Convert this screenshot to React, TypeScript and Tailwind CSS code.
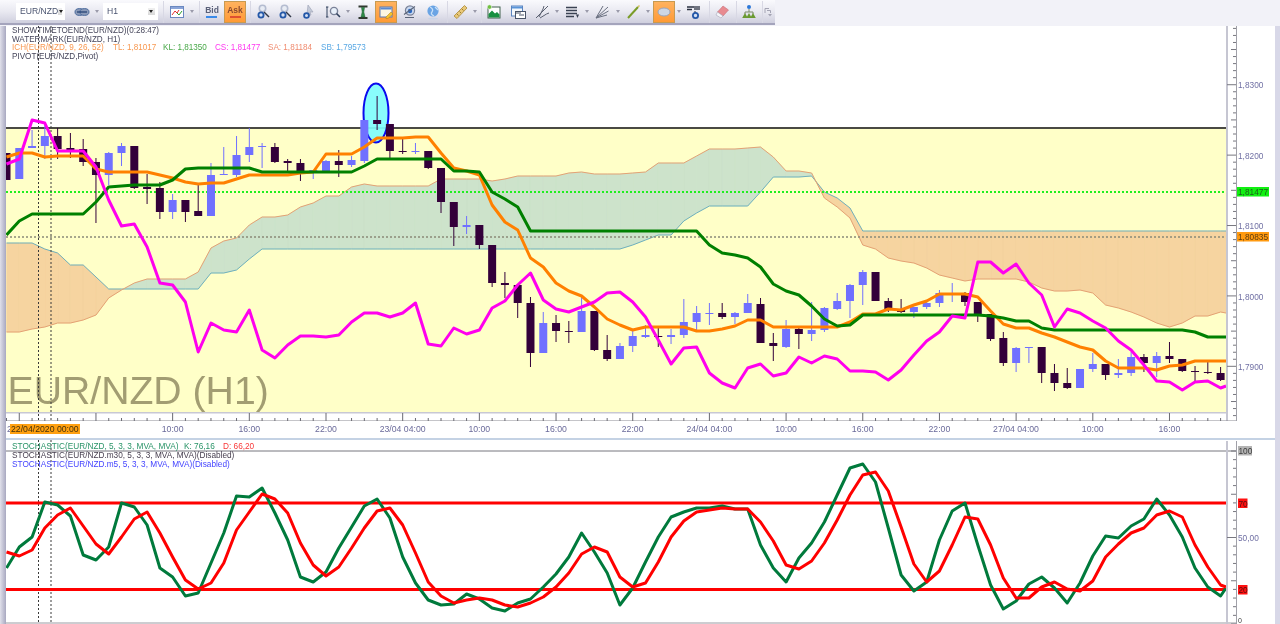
import type { ReactNode } from 'react';

// candle i sits at this x, one bar per hour
const barX = (i: number) => 6.5 + 12.78 * i;
const END_X = 1226;

// top, bottom, wick top, wick bottom, dark
type Candle = [number, number, number, number, number];

const candles: Candle[] = [
  [153, 180, 153, 180, 1], [148, 179, 148, 179, 0], [146, 148, 130, 148, 0], [136, 146, 123, 159, 0],
  [136, 149, 128, 159, 1], [148, 151, 133, 158, 1], [149, 162, 139, 166, 1], [162, 175, 158, 223, 1],
  [153, 175, 152, 185, 0], [146, 153, 143, 166, 0], [146, 188, 146, 189, 1], [187, 189, 174, 204, 1],
  [188, 212, 182, 219, 1], [200, 212, 194, 219, 0], [200, 212, 200, 222, 1], [211, 216, 185, 216, 1],
  [175, 216, 163, 216, 0], [174, 175, 147, 175, 0], [155, 175, 136, 177, 0], [147, 155, 128, 162, 0],
  [146, 147, 143, 168, 0], [147, 162, 143, 163, 1], [161, 163, 159, 172, 1], [163, 172, 159, 181, 1],
  [170, 172, 170, 179, 0], [161, 172, 160, 173, 0], [161, 165, 150, 177, 1], [160, 165, 156, 167, 0],
  [120, 161, 120, 163, 0], [120, 124, 96, 130, 1], [124, 151, 124, 158, 1], [151, 152, 139, 154, 1],
  [151, 152, 143, 154, 0], [151, 168, 151, 169, 1], [168, 202, 168, 213, 1], [202, 227, 202, 246, 1],
  [225, 227, 216, 234, 0], [225, 245, 225, 249, 1], [245, 283, 245, 287, 1], [283, 285, 272, 298, 1],
  [285, 303, 285, 318, 1], [303, 353, 297, 367, 1], [323, 353, 312, 353, 0], [323, 331, 315, 342, 1],
  [331, 332, 321, 343, 1], [311, 332, 297, 332, 0], [311, 350, 311, 351, 1], [350, 359, 335, 361, 1],
  [346, 359, 343, 359, 0], [336, 346, 331, 352, 0], [335, 337, 325, 338, 0], [336, 337, 327, 347, 1],
  [335, 337, 329, 344, 0], [322, 335, 299, 338, 0], [313, 322, 306, 330, 0], [313, 314, 303, 325, 0],
  [313, 317, 303, 319, 1], [313, 317, 312, 324, 0], [303, 313, 294, 313, 0], [304, 343, 298, 343, 1],
  [343, 346, 333, 361, 1], [329, 347, 320, 348, 0], [329, 334, 327, 349, 1], [330, 334, 302, 341, 0],
  [308, 330, 307, 332, 0], [301, 309, 293, 310, 0], [285, 301, 284, 318, 0], [272, 285, 270, 305, 0],
  [272, 301, 272, 301, 1], [301, 309, 298, 312, 1], [310, 312, 299, 313, 1], [307, 312, 307, 318, 0],
  [303, 307, 300, 309, 0], [293, 303, 290, 307, 0], [293, 294, 283, 302, 0], [293, 302, 292, 306, 1],
  [302, 314, 302, 322, 1], [314, 339, 314, 341, 1], [338, 363, 332, 366, 1], [348, 363, 347, 372, 0],
  [347, 348, 347, 363, 0], [347, 373, 347, 383, 1], [373, 383, 364, 391, 1], [383, 388, 368, 389, 1],
  [369, 388, 369, 388, 0], [364, 369, 353, 372, 0], [364, 375, 364, 380, 1], [373, 375, 359, 378, 0],
  [357, 373, 352, 376, 0], [357, 363, 354, 372, 1], [356, 363, 352, 377, 0], [356, 359, 342, 363, 1],
  [359, 371, 359, 372, 1], [371, 372, 366, 381, 1], [372, 373, 362, 374, 1], [373, 380, 367, 381, 1],
];

const cs = [
  164, 159, 120, 123, 151, 151, 151, 167, 200, 226, 224, 247, 283, 285, 302, 352, 323, 330, 332, 310, 350, 358, 345, 336, 336, 337, 335, 322, 313, 313, 317, 313, 303, 344,
  346, 328, 334, 330, 308, 301, 285, 273, 300, 309, 312, 307, 302, 293, 292, 302, 317, 340, 364, 348, 347, 373, 383, 388, 368, 364, 376, 373, 357, 363, 356, 359, 371,
  371, 372, 380, 370, 355, 341, 332, 316, 318, 262, 262, 273, 264, 283, 295, 327, 309, 313, 321, 328, 341, 350, 365, 381, 382, 390, 382, 381, 388, 386,
];
const tl = [
  157, 153, 153, 157, 156, 156, 156, 169, 172, 172, 172, 172, 175, 178, 182, 184, 183, 183, 179, 175, 175, 175, 175, 173, 172, 154, 154, 154, 147, 138, 138, 138, 137, 137,
  153, 168, 171, 175, 205, 222, 230, 258, 267, 283, 291, 296, 307, 319, 325, 330, 327, 327, 327, 327, 331, 331, 329, 326, 320, 320, 327, 327, 327, 327, 327, 327, 322,
  314, 314, 309, 310, 305, 301, 294, 294, 294, 297, 311, 324, 328, 328, 333, 337, 342, 347, 350, 361, 368, 368, 368, 370, 366, 365, 361, 361, 361, 361,
];
const kl = [
  235, 221, 214, 214, 214, 214, 214, 202, 187, 186, 185, 185, 185, 180, 169, 168, 168, 168, 168, 168, 172, 172, 172, 172, 172, 172, 172, 172, 166, 159, 159, 159, 159, 159,
  159, 171, 171, 172, 192, 199, 207, 231, 231, 231, 231, 231, 231, 231, 231, 231, 231, 231, 231, 231, 231, 245, 253, 255, 258, 267, 284, 291, 295, 306, 319, 326, 325,
  315, 315, 315, 315, 315, 315, 315, 315, 315, 315, 316, 318, 321, 321, 328, 330, 330, 330, 330, 330, 330, 330, 330, 330, 330, 330, 332, 337, 337, 337,
];
const sa = [
  332, 332, 329, 327, 323, 323, 320, 315, 298, 290, 283, 279, 279, 279, 279, 272, 248, 241, 238, 225, 217, 217, 215, 207, 203, 196, 196, 187, 184, 186, 186, 186, 186, 186,
  179, 179, 179, 179, 181, 179, 176, 176, 176, 176, 173, 172, 174, 174, 174, 173, 172, 163, 163, 163, 156, 149, 149, 149, 148, 147, 157, 171, 171, 173, 198, 207, 218,
  245, 249, 258, 261, 263, 268, 275, 278, 281, 279, 279, 279, 279, 282, 288, 291, 291, 290, 293, 305, 308, 312, 317, 323, 327, 323, 316, 316, 312, 313,
];
const sb = [
  243, 243, 243, 249, 253, 265, 265, 277, 289, 289, 289, 289, 289, 289, 289, 289, 273, 273, 270, 259, 249, 249, 249, 249, 249, 249, 249, 249, 249, 249, 249, 249, 249, 249,
  249, 249, 249, 249, 249, 249, 249, 249, 249, 249, 249, 249, 249, 249, 249, 245, 240, 235, 235, 221, 213, 206, 206, 206, 206, 192, 177, 177, 177, 176, 192, 198, 208,
  231, 231, 231, 231, 231, 231, 231, 231, 231, 231, 231, 231, 231, 231, 231, 231, 231, 231, 231, 231, 231, 231, 231, 231, 231, 231, 231, 231, 231, 231,
];
const stochK = [
  568, 547, 537, 502, 505, 516, 555, 560, 547, 503, 507, 525, 568, 577, 596, 593, 563, 533, 496, 497, 488, 513, 540, 577, 582, 572, 548, 527, 506, 499, 518, 557, 583, 600,
  605, 604, 594, 599, 608, 611, 603, 599, 587, 574, 557, 533, 552, 573, 605, 588, 562, 537, 517, 512, 508, 508, 506, 509, 509, 545, 568, 582, 558, 543, 522, 495, 468,
  464, 482, 528, 575, 591, 582, 540, 511, 503, 545, 585, 609, 601, 584, 577, 588, 603, 583, 556, 536, 538, 526, 519, 499, 515, 537, 568, 587, 596, 588,
];
const stochD = [
  552, 556, 550, 528, 515, 508, 526, 544, 554, 537, 519, 512, 533, 557, 580, 589, 583, 563, 530, 512, 494, 499, 513, 543, 565, 576, 567, 548, 528, 511, 508, 525, 553, 582,
  596, 603, 600, 598, 600, 605, 607, 603, 597, 587, 573, 554, 547, 552, 577, 587, 583, 562, 537, 521, 512, 510, 508, 509, 509, 522, 541, 565, 569, 561, 543, 520, 495,
  475, 472, 491, 527, 564, 582, 571, 545, 517, 519, 545, 578, 598, 598, 587, 582, 589, 591, 581, 557, 544, 533, 528, 515, 511, 517, 545, 567, 585, 587,
];

// last value of each series is the right edge of the plot, not a bar
const xAt = (i: number, len: number) => (i === len - 1 ? END_X : barX(i));
const points = (ys: number[]) => ys.map((y, i) => `${xAt(i, ys.length).toFixed(1)},${y}`).join(' ');

// split the kumo into green and orange quads, cutting at each crossing
function cloudPaths() {
  let green = '';
  let orange = '';
  const quad = (x1: number, a1: number, b1: number, x2: number, a2: number, b2: number) => {
    const d = `M${x1} ${a1}L${x2} ${a2}L${x2} ${b2}L${x1} ${b1}Z`;
    if (a1 + a2 < b1 + b2) green += d;
    else orange += d;
  };
  for (let i = 0; i < sa.length - 1; i++) {
    const x1 = xAt(i, sa.length);
    const x2 = xAt(i + 1, sa.length);
    const d1 = sa[i] - sb[i];
    const d2 = sa[i + 1] - sb[i + 1];
    if (d1 * d2 < 0) {
      const t = d1 / (d1 - d2);
      const xc = x1 + (x2 - x1) * t;
      const yc = sa[i] + (sa[i + 1] - sa[i]) * t;
      quad(x1, sa[i], sb[i], xc, yc, yc);
      quad(xc, yc, yc, x2, sa[i + 1], sb[i + 1]);
    } else {
      quad(x1, sa[i], sb[i], x2, sa[i + 1], sb[i + 1]);
    }
  }
  return { green, orange };
}

const timeLabels = ['10:00', '16:00', '22:00', '23/04 04:00', '10:00', '16:00', '22:00', '24/04 04:00', '10:00', '16:00', '22:00', '27/04 04:00', '10:00', '16:00'];

function Cursors({ top, bottom }: { top: number; bottom: number }) {
  return (
    <g stroke="#3a3a3a" strokeWidth="1" strokeDasharray="2 2">
      <line x1="38.5" y1={top} x2="38.5" y2={bottom} />
      <line x1="51" y1={top} x2="51" y2={bottom} />
    </g>
  );
}

function PriceChart() {
  const { green, orange } = cloudPaths();
  const ticks = Array.from({ length: 56 }, (_, k) => 28.4 + 7.04 * k);
  return (
    <svg className="block w-[1269px] h-[395px]" viewBox="6 26 1269 395">
      <rect x="6" y="128" width="1220" height="284" fill="#ffffc8" />
      <text x="7.5" y="404" fontSize="39.2" fill="#a29d72">EUR/NZD (H1)</text>
      <path d={green} fill="#cde3cb" stroke="#cde3cb" strokeWidth="0.4" />
      <path d={orange} fill="#f6d4a0" stroke="#f6d4a0" strokeWidth="0.4" />
      <polyline points={points(sb)} fill="none" stroke="#6fb0bc" strokeWidth="1" />
      <polyline points={points(sa)} fill="none" stroke="#e4a274" strokeWidth="1" />
      <line x1="6" y1="128" x2={END_X} y2="128" stroke="#4a4a44" strokeWidth="2" />
      <line x1="6" y1="192" x2={END_X} y2="192" stroke="#20ee20" strokeWidth="2" strokeDasharray="2 2" />
      <line x1="6" y1="237" x2={END_X} y2="237" stroke="#8a8a78" strokeWidth="1.5" strokeDasharray="2 2" />
      <Cursors top={26} bottom={421} />
      <ellipse cx="376" cy="113" rx="12.5" ry="29.5" fill="#7ffcfc" fillOpacity="0.92" stroke="#0a0aee" strokeWidth="2" />
      {candles.map(([top, bottom, wickTop, wickBottom, dark], i) => {
        const x = barX(i);
        const color = dark ? '#33003a' : '#7070ff';
        return (
          <g key={i}>
            <line x1={x} y1={wickTop} x2={x} y2={wickBottom} stroke={color} strokeWidth="1" />
            <rect x={x - 4} y={top} width="8" height={bottom - top} fill={color} />
          </g>
        );
      })}
      <polyline points={points(tl)} fill="none" stroke="#ff8000" strokeWidth="3" strokeLinejoin="round" />
      <polyline points={points(kl)} fill="none" stroke="#008000" strokeWidth="3" strokeLinejoin="round" />
      <polyline points={points(cs)} fill="none" stroke="#ff00ee" strokeWidth="3" strokeLinejoin="round" />

      {/* price axis */}
      <rect x={END_X} y="26" width="2" height="395" fill="#c6c6d2" />
      <rect x={END_X + 2} y="26" width="8" height="395" fill="#ffffff" />
      <line x1="1236.5" y1="26" x2="1236.5" y2="421" stroke="#a0a0a8" strokeWidth="1" />
      <g stroke="#77777f" strokeWidth="1">
        {ticks.map((y, k) => {
          const major = (k - 8) % 10 === 0;
          const mid = (k - 8) % 5 === 0;
          return <line key={k} x1={major ? 1227 : mid ? 1231 : 1233} y1={y} x2="1236" y2={y} />;
        })}
      </g>
      <g fontSize="8.3" fill="#7070a4">
        <text x="1238" y="88">1,8300</text>
        <text x="1238" y="158.5">1,8200</text>
        <text x="1238" y="229">1,8100</text>
        <text x="1238" y="299.5">1,8000</text>
        <text x="1238" y="370">1,7900</text>
      </g>
      <rect x="1237" y="187" width="32" height="9.5" fill="#10f010" />
      <text x="1238" y="195" fontSize="8.3" fill="#1c5c1c">1,81477</text>
      <rect x="1237" y="232" width="32" height="9.5" fill="#ff9a10" />
      <text x="1238" y="240" fontSize="8.3" fill="#5c3c10">1,80835</text>

      {/* time axis */}
      <rect x="6" y="412" width="1220" height="1.5" fill="#c8c8d4" />
      <line x1="6" y1="421" x2="1236" y2="421" stroke="#8a8a92" strokeWidth="1" />
      <g stroke="#6a6a72" strokeWidth="1">
        {candles.map((_, i) => (
          <line key={i} x1={barX(i)} y1={(i - 1) % 6 === 0 ? 413 : 418} x2={barX(i)} y2="421" />
        ))}
      </g>
    </svg>
  );
}

function StochChart() {
  const yOf = (v: number) => 451 + (100 - v) * 1.73;
  const ticks = Array.from({ length: 21 }, (_, k) => k * 5);
  return (
    <svg className="block w-[1269px] h-[184px]" viewBox="6 440 1269 184">
      <line x1="6" y1="451" x2="1236" y2="451" stroke="#77777f" strokeWidth="1" />
      <line x1="6" y1="623" x2="1236" y2="623" stroke="#9a9aa2" strokeWidth="1" />
      <Cursors top={440} bottom={624} />
      <line x1="6" y1="503" x2={END_X} y2="503" stroke="#ff0000" strokeWidth="3" />
      <line x1="6" y1="589.5" x2={END_X} y2="589.5" stroke="#ff0000" strokeWidth="3" />
      <polyline points={points(stochK)} fill="none" stroke="#007a3c" strokeWidth="3" strokeLinejoin="round" />
      <polyline points={points(stochD)} fill="none" stroke="#ff0000" strokeWidth="3" strokeLinejoin="round" />

      <rect x={END_X} y="441" width="2" height="183" fill="#c6c6d2" />
      <line x1="1236.5" y1="441" x2="1236.5" y2="624" stroke="#a0a0a8" strokeWidth="1" />
      <g stroke="#77777f" strokeWidth="1">
        {ticks.map((v) => (
          <line key={v} x1={v === 50 ? 1227 : v % 25 === 0 ? 1231 : 1233} y1={yOf(v)} x2="1236" y2={yOf(v)} />
        ))}
      </g>
      <rect x="1238" y="446" width="14" height="9.5" fill="#b4b4b4" />
      <text x="1238.5" y="454" fontSize="8.3" fill="#3c3c3c">100</text>
      <rect x="1238" y="498.5" width="9.5" height="9.5" fill="#ff1010" />
      <text x="1238.5" y="506.5" fontSize="8.3" fill="#501010">70</text>
      <rect x="1238" y="585" width="9.5" height="9.5" fill="#ff1010" />
      <text x="1238.5" y="593" fontSize="8.3" fill="#501010">20</text>
      <text x="1238" y="541" fontSize="8.3" fill="#7070a4">50,00</text>
      <text x="1238" y="622.5" fontSize="7" fill="#3c3c3c">0</text>
    </svg>
  );
}

/* ---- toolbar ---- */

function Tool({ className, children }: { className: string; children?: ReactNode }) {
  return <div className={`flex items-center justify-center h-full shrink-0 ${className}`}>{children}</div>;
}

function OrangeTool({ className, children }: { className: string; children?: ReactNode }) {
  return (
    <div className={`flex items-center justify-center h-[22px] w-[22px] shrink-0 border border-[#c89a50] bg-gradient-to-b from-[#ffb25e] to-[#ff9a34] ${className}`}>
      {children}
    </div>
  );
}

function Drop({ className }: { className: string }) {
  return (
    <Tool className={className}>
      <span className="block w-0 h-0 border-x-[2.5px] border-x-transparent border-t-[3px] border-t-[#9a9aaa]" />
    </Tool>
  );
}

function Sep({ className }: { className: string }) {
  return <div className={`w-[1px] h-[22px] shrink-0 bg-[#d8d8e4] ${className}`} />;
}

function ToolSelect({ className, label }: { className: string; label: string }) {
  return (
    <div className={`flex items-center justify-between h-[17px] pl-[4px] pr-[3px] shrink-0 bg-white text-[8.6px] text-[#4a5470] ${className}`}>
      <span>{label}</span>
      <span className="block w-[7px] h-[7px] bg-gradient-to-b from-[#f0f0f0] to-[#d8d8d8] relative">
        <span className="absolute left-[1px] top-[2px] block w-0 h-0 border-x-[2.5px] border-x-transparent border-t-[3px] border-t-[#222]" />
      </span>
    </div>
  );
}

function Icon({ children }: { children: ReactNode }) {
  return <svg width="16" height="16" viewBox="0 0 16 16" fill="none">{children}</svg>;
}

const ZoomGlyph = ({ lens = '#b4bcd0', spot = '#2458a8' }: { lens?: string; spot?: string }) => (
  <Icon>
    <circle cx="7.5" cy="4.5" r="3.2" stroke={lens} strokeWidth="1.6" fill="#e8ecf4" />
    <path d="M9 8 L14 13" stroke="#303848" strokeWidth="1.4" />
    <circle cx="6" cy="11" r="2.6" stroke={spot} strokeWidth="1.8" fill="#d4e0f4" />
  </Icon>
);

function Toolbar() {
  return (
    <div className="flex items-center w-[775px] h-[25px] shrink-0 border-b-2 border-[#a4a4bc] bg-gradient-to-b from-[#fafafd] via-[#e9e9f1] to-[#cfcfde] blur-[0.35px]">
      <ToolSelect className="ml-[16px] w-[49px]" label="EUR/NZD" />
      <Tool className="ml-[6px] w-[22px]">
        <svg width="16" height="10" viewBox="0 0 16 10" fill="none">
          <ellipse cx="5.5" cy="5" rx="4.5" ry="3.4" fill="#8a9ab8" stroke="#4a6a9c" />
          <ellipse cx="10.5" cy="5" rx="4.5" ry="3.4" fill="#8a9ab8" stroke="#4a6a9c" />
          <path d="M3 5 H13" stroke="#1e3e70" strokeWidth="1.2" />
        </svg>
      </Tool>
      <Drop className="w-[8px]" />
      <ToolSelect className="ml-[2px] w-[55px]" label="H1" />
      <Sep className="ml-[5px]" />
      <Tool className="w-[26px]">
        <Icon>
          <rect x="1.5" y="2.5" width="13" height="11" fill="#fff" stroke="#6a88c0" />
          <rect x="2" y="3" width="12" height="2" fill="#8aa4d8" />
          <path d="M3 11 L6 7 L8 9 L10 6" stroke="#e03030" />
          <path d="M8 9 L10 11 L13 7" stroke="#30a030" />
        </Icon>
      </Tool>
      <Drop className="w-[4px]" />
      <Sep className="ml-[5px]" />
      <Tool className="w-[24px]">
        <div className="flex flex-col items-center">
          <span className="text-[8.5px] font-bold leading-[9px] text-[#5a6078]">Bid</span>
          <span className="block mt-[1px] w-[11px] h-[2px] bg-[#3a8ae8]" />
        </div>
      </Tool>
      <OrangeTool className="">
        <div className="flex flex-col items-center">
          <span className="text-[8.5px] font-bold leading-[9px] text-[#8a4a30]">Ask</span>
          <span className="block mt-[1px] w-[11px] h-[2px] bg-[#e05030]" />
        </div>
      </OrangeTool>
      <Sep className="ml-[4px]" />
      <Tool className="w-[24px]"><ZoomGlyph /></Tool>
      <Tool className="w-[20px]"><ZoomGlyph /></Tool>
      <Tool className="w-[26px]">
        <Icon>
          <path d="M8 1 L13 8 L10 8 L11 11 L9.5 11.5 L8.4 8.6 L7 10 Z" fill="#c4cad8" stroke="#9aa0b4" strokeWidth="0.6" />
          <circle cx="6.5" cy="11.5" r="2.4" stroke="#2458a8" strokeWidth="1.8" fill="#d4e0f4" />
        </Icon>
      </Tool>
      <Tool className="w-[24px]">
        <Icon>
          <circle cx="9" cy="7" r="3.6" stroke="#7a8298" strokeWidth="1.4" fill="#e8f0fa" />
          <path d="M11.5 9.5 L15 13" stroke="#30405c" strokeWidth="1.6" />
          <path d="M2 3 V13 M1 3 H3.4 M1 13 H3.4" stroke="#30405c" />
        </Icon>
      </Tool>
      <Drop className="w-[6px]" />
      <Tool className="w-[24px]">
        <Icon>
          <path d="M3.5 2.5 H12.5 M3.5 14 H12.5" stroke="#303830" strokeWidth="2" />
          <path d="M6.5 3.5 H9.5 L8.8 8 L10 13 H6 L7.2 8 Z" fill="#2e8a48" stroke="#1c5c30" strokeWidth="0.5" />
        </Icon>
      </Tool>
      <OrangeTool className="">
        <Icon>
          <rect x="2" y="3" width="12" height="10" fill="#fdf6e0" stroke="#5a78b4" />
          <rect x="2.5" y="3.5" width="11" height="2" fill="#5a88d0" />
          <path d="M8 13 L13 8 L15 10 L10 14.5 L8 14.5 Z" fill="#f4c430" stroke="#a87818" strokeWidth="0.5" />
        </Icon>
      </OrangeTool>
      <Tool className="w-[25px]">
        <Icon>
          <circle cx="8" cy="6.5" r="4.6" stroke="#7a8298" strokeWidth="1.2" fill="#c8d8f0" />
          <circle cx="8" cy="7" r="2.2" fill="#2c68c0" />
          <path d="M3 13.5 H12 M2 10.5 L13 2.5" stroke="#5a6478" strokeWidth="1.1" />
        </Icon>
      </Tool>
      <Tool className="w-[22px]">
        <Icon>
          <circle cx="8" cy="7" r="5.6" fill="#6aa4e4" />
          <path d="M5 3 Q9 5 7 8 Q5 10 9 12 M10 3 L13 6" stroke="#c8e0f8" strokeWidth="1.3" />
          <ellipse cx="8" cy="14.6" rx="5" ry="0.9" fill="#c8d4e8" />
        </Icon>
      </Tool>
      <Sep className="ml-[3px]" />
      <Tool className="w-[24px]">
        <Icon>
          <path d="M12.5 1.5 L15 4 L5 14.5 L2 12 Z" fill="#e8c878" stroke="#b89a50" />
          <path d="M10 5 L11.5 6.5 M7.5 7.5 L9 9 M5 10 L6.5 11.5" stroke="#a07c30" />
        </Icon>
      </Tool>
      <Drop className="w-[6px]" />
      <Sep className="ml-[3px]" />
      <Tool className="w-[24px]">
        <Icon>
          <rect x="2" y="3" width="12" height="11" fill="#fff" stroke="#40604c" />
          <path d="M2.5 13.5 V10 L6 6.5 L9 9.5 L11 8 L13.5 10.5 V13.5 Z" fill="#189040" />
          <circle cx="3.5" cy="3" r="2.2" fill="#70c040" stroke="#fff" strokeWidth="0.5" />
        </Icon>
      </Tool>
      <Tool className="w-[24px]">
        <Icon>
          <rect x="1.5" y="2" width="11" height="10" fill="#f4f8fc" stroke="#5a84c0" />
          <rect x="2" y="2.5" width="10" height="2" fill="#5a94d8" />
          <rect x="5.5" y="7.5" width="10" height="7" fill="#fff" stroke="#4a5468" />
          <path d="M5 9 H11 M9 11 H14" stroke="#4a5468" />
        </Icon>
      </Tool>
      <Tool className="w-[24px]">
        <Icon>
          <path d="M2 14 L8 8 L14 2 M5 13 L9 5 M6 14 L12.5 10 M9 5 L10 2 M12.5 10 L15 9" stroke="#5a6070" strokeWidth="1" />
        </Icon>
      </Tool>
      <Drop className="w-[6px]" />
      <Tool className="w-[24px]">
        <Icon>
          <path d="M2 3.5 H13 M2 6.5 H13 M2 9.5 H13 M2 12.5 H10" stroke="#3a4252" strokeWidth="1.6" />
          <path d="M12 10.5 L13.5 14 L15 10.5 Z" fill="#3a4252" />
        </Icon>
      </Tool>
      <Drop className="w-[6px]" />
      <Tool className="w-[24px]">
        <Icon>
          <path d="M2 14 L14 3 M2 14 L14.5 7 M2 14 L13 11 M2 14 L9 2" stroke="#6a7080" strokeWidth="1" />
        </Icon>
      </Tool>
      <Drop className="w-[8px]" />
      <Tool className="w-[22px]">
        <Icon>
          <path d="M3 14 L13 3" stroke="#7a9c28" strokeWidth="2" />
          <path d="M13 3 L14.5 1.5" stroke="#d8c468" strokeWidth="1.6" />
        </Icon>
      </Tool>
      <Drop className="w-[8px]" />
      <OrangeTool className="ml-[1px]">
        <svg width="14" height="10" viewBox="0 0 14 10">
          <ellipse cx="7" cy="5" rx="6" ry="4" fill="#cdd6e4" stroke="#98a4bc" />
        </svg>
      </OrangeTool>
      <Drop className="w-[8px]" />
      <Tool className="w-[22px]">
        <Icon>
          <path d="M1 3 H8 M1 5.5 H6 M9 2 V6 M11 2 V6 M13 2 V6" stroke="#2a3040" strokeWidth="1.3" />
          <path d="M9 7 V9" stroke="#2a3040" />
          <circle cx="9.5" cy="11.5" r="2.6" stroke="#2458a8" strokeWidth="1.8" fill="#d4e0f4" />
        </Icon>
      </Tool>
      <Sep className="ml-[4px]" />
      <Tool className="w-[24px]">
        <Icon>
          <path d="M9 2 L14.5 6 L9 12 L3.5 8 Z" fill="#e88a90" stroke="#c87078" strokeWidth="0.6" />
          <path d="M3.5 8 L9 12 L7 14 L2 11 Z" fill="#f4f4f8" stroke="#a8a8b8" strokeWidth="0.6" />
        </Icon>
      </Tool>
      <Sep className="ml-[2px]" />
      <Tool className="w-[24px]">
        <Icon>
          <circle cx="8" cy="3" r="2" fill="#2c78d8" />
          <path d="M8 5 V8 M4 10 V8 H12 V10" stroke="#7a8a68" />
          <path d="M4 9 L6.8 14 H1.2 Z M8 9 L10.8 14 H5.2 Z M12 9 L14.8 14 H9.2 Z" fill="#6a9a30" />
        </Icon>
      </Tool>
      <Sep className="ml-[1px]" />
      <Tool className="w-[10px]">
        <svg width="9" height="10" viewBox="0 0 9 10" fill="none">
          <path d="M1 1.5 H5 M1 1.5 V6 M3 3.5 H6.5 V6" stroke="#a4a4b4" />
          <path d="M4 7 L6 9.5 L8 7 Z" fill="#a4a4b4" />
        </svg>
      </Tool>
    </div>
  );
}

export default function App() {
  return (
    <div className="flex flex-col w-[1280px] h-[624px] overflow-hidden bg-white font-['Liberation_Sans',Arial,sans-serif] blur-[0.5px]">
      {/* toolbar strip */}
      <div className="flex h-[26px] shrink-0 bg-[#f2f2f8]">
        <Toolbar />
      </div>

      <div className="flex flex-1 min-h-0">
        <div className="w-[6px] shrink-0 bg-gradient-to-r from-[#e0e0ea] to-[#a8a8c0]" />

        <div className="flex flex-col w-[1269px] shrink-0">
          {/* price pane */}
          <div className="relative h-[395px] shrink-0">
            <PriceChart />
            <div className="absolute left-[6px] top-[1px] text-[8.15px] leading-[8.7px] whitespace-nowrap text-[#45455a]">
              <div>SHOWTIMETOEND(EUR/NZD)(0:28:47)</div>
              <div>WATERMARK(EUR/NZD, H1)</div>
              <div className="flex">
                <span className="w-[101px] text-[#f89850]">ICH(EUR/NZD, 9, 26, 52)</span>
                <span className="w-[50px] text-[#f89850]">TL: 1,81017</span>
                <span className="w-[52px] text-[#48a848]">KL: 1,81350</span>
                <span className="w-[53px] text-[#ff38f0]">CS: 1,81477</span>
                <span className="w-[53px] text-[#f08c70]">SA: 1,81184</span>
                <span className="text-[#58a8e4]">SB: 1,79573</span>
              </div>
              <div>PIVOT(EUR/NZD,Pivot)</div>
            </div>
          </div>

          {/* time labels */}
          <div className="relative flex items-center h-[17px] shrink-0 pt-[1px] pl-[128.3px] text-[8.7px] text-[#6a6a9a]">
            {timeLabels.map((label, i) => (
              <span key={i} className="w-[76.68px] shrink-0 text-center whitespace-nowrap">{label}</span>
            ))}
            <span className="absolute left-[1px] top-[3px] leading-[10px] text-[#6a6a9a]">2</span>
            <span className="absolute left-[4px] top-[3px] h-[10px] leading-[10px] px-[1px] bg-[#ffa010] text-[#40300c] whitespace-nowrap">22/04/2020 00:00</span>
          </div>

          <div className="h-[2px] shrink-0 bg-[#c4d2e4]" />

          {/* stochastic pane */}
          <div className="relative h-[184px] shrink-0">
            <StochChart />
            <div className="absolute left-[6px] top-[2px] text-[8.25px] leading-[9px] whitespace-nowrap">
              <div className="flex text-[#2a9468]">
                <span className="w-[172px]">STOCHASTIC(EUR/NZD, 5, 3, 3, MVA, MVA)</span>
                <span className="w-[39px]">K: 76,16</span>
                <span className="text-[#f83838]">D: 66,20</span>
              </div>
              <div className="text-[#484050]">STOCHASTIC(EUR/NZD.m30, 5, 3, 3, MVA, MVA)(Disabled)</div>
              <div className="text-[#4444ff]">STOCHASTIC(EUR/NZD.m5, 5, 3, 3, MVA, MVA)(Disabled)</div>
            </div>
          </div>
        </div>

        <div className="w-[5px] shrink-0 bg-[#d8d8e8]" />
      </div>
    </div>
  );
}
